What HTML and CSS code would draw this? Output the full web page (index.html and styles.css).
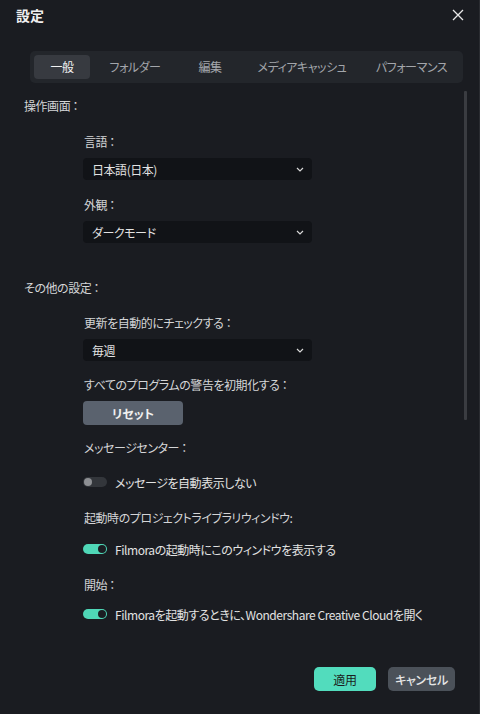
FILE: index.html
```html
<!DOCTYPE html>
<html lang="ja">
<head>
<meta charset="utf-8">
<title>設定</title>
<link rel="stylesheet" href="styles.css">
</head>
<body>
<div class="window">
  <header class="titlebar">
    <span class="title">設定</span>
    <svg class="close" width="12" height="12" viewBox="0 0 12 12"><path d="M1 1 L11 11 M11 1 L1 11" stroke="#e8e8e8" stroke-width="1.3" fill="none"/></svg>
  </header>

  <nav class="tabs">
    <span class="tab active">一般</span>
    <span class="tab">フォルダー</span>
    <span class="tab">編集</span>
    <span class="tab">メディアキャッシュ</span>
    <span class="tab">パフォーマンス</span>
  </nav>

  <div class="body">
    <div class="content">
      <div class="section-label s1">操作画面 ：</div>

      <div class="field-label f-lang">言語 ：</div>
      <div class="select">
        <span>日本語(日本)</span>
        <svg class="chev" width="8" height="5" viewBox="0 0 8 5"><path d="M1 1 L4 4 L7 1" stroke="#d8d8d8" stroke-width="1.2" fill="none"/></svg>
      </div>

      <div class="field-label f-look">外観 ：</div>
      <div class="select">
        <span>ダークモード</span>
        <svg class="chev" width="8" height="5" viewBox="0 0 8 5"><path d="M1 1 L4 4 L7 1" stroke="#d8d8d8" stroke-width="1.2" fill="none"/></svg>
      </div>

      <div class="section-label s2">その他の設定 ：</div>

      <div class="field-label f-upd">更新を自動的にチェックする ：</div>
      <div class="select">
        <span>毎週</span>
        <svg class="chev" width="8" height="5" viewBox="0 0 8 5"><path d="M1 1 L4 4 L7 1" stroke="#d8d8d8" stroke-width="1.2" fill="none"/></svg>
      </div>

      <div class="field-label f-warn">すべてのプログラムの警告を初期化する ：</div>
      <button class="reset">リセット</button>

      <div class="field-label f-msg">メッセージセンター ：</div>
      <div class="toggle-row t1">
        <span class="toggle off"><span class="knob"></span></span>
        <span>メッセージを自動表示しない</span>
      </div>

      <div class="field-label f-start">起動時のプロジェクトライブラリウィンドウ:</div>
      <div class="toggle-row t2">
        <span class="toggle on"><span class="knob"></span></span>
        <span>Filmoraの起動時にこのウィンドウを表示する</span>
      </div>

      <div class="field-label f-open">開始 ：</div>
      <div class="toggle-row t3">
        <span class="toggle on"><span class="knob"></span></span>
        <span>Filmoraを起動するときに、Wondershare Creative Cloudを開く</span>
      </div>
    </div>
    <div class="scrollbar"></div>
  </div>

  <footer class="footer">
    <button class="btn apply">適用</button>
    <button class="btn cancel">キャンセル</button>
  </footer>
</div>
</body>
</html>
```
FILE: styles.css
```css
* { box-sizing: border-box; }
html, body { margin: 0; padding: 0; }
body {
  width: 480px;
  height: 714px;
  background: #1a1c21;
  font-family: "Noto Sans CJK JP", "Noto Sans", sans-serif;
  font-feature-settings: "palt";
  letter-spacing: -0.45px;
  color: #d4d5d7;
  font-size: 12px;
  overflow: hidden;
}
.window {
  width: 480px;
  height: 714px;
  display: flex;
  flex-direction: column;
  border-right: 1px solid #2a2c31;
}
.titlebar {
  height: 30px;
  display: flex;
  align-items: center;
  justify-content: space-between;
  padding: 0 16px 0 16px;
}
.title {
  font-size: 14px;
  font-weight: 700;
  color: #f0f0f0;
  line-height: 30px;
  letter-spacing: 0;
}
.close { margin-right: -1px; }

.tabs {
  margin: 21px 16px 0 30px;
  height: 32px;
  background: #23262b;
  border-radius: 5px;
  padding: 4px;
  display: grid;
  grid-template-columns: 56px 90px 60px 124px 1fr;
  align-items: center;
}
.tab {
  height: 24px;
  line-height: 24px;
  text-align: center;
  color: #a3a6ab;
  border-radius: 4px;
  white-space: nowrap;
}
.tab.active {
  background: #373a40;
  color: #f2f2f2;
}

.body {
  display: flex;
  flex: 1;
}
.content {
  flex: 1;
  padding-left: 24px;
}
.scrollbar {
  width: 3px;
  height: 329px;
  margin: 8px 12px 0 0;
  background: #3a3c41;
  border-radius: 1px;
}

.section-label {
  line-height: 16px;
  color: #d4d5d7;
}
.s1 { margin-top: 15px; }
.s2 { margin-top: 37px; }

.field-label {
  margin-left: 60px;
  line-height: 16px;
  color: #d4d5d7;
}
.f-lang { margin-top: 20px; }
.f-look { margin-top: 17px; }
.f-upd { margin-top: 19px; }
.f-warn { margin-top: 16px; }
.f-msg { margin-top: 15px; }
.f-start { margin-top: 20px; }
.f-open { margin-top: 20px; }

.select {
  margin: 8px 0 0 59px;
  width: 229px;
  height: 22px;
  background: #111317;
  border-radius: 4px;
  display: flex;
  align-items: center;
  justify-content: space-between;
  padding: 0 8px 0 9px;
  color: #e2e2e2;
}
.chev { margin-top: 1px; }

.reset {
  display: block;
  margin: 8px 0 0 59px;
  width: 100px;
  height: 24px;
  border: none;
  border-radius: 4px;
  background: #5a626e;
  color: #f0f0f0;
  font-family: inherit;
  font-feature-settings: "palt";
  font-size: 12px;
  font-weight: 700;
  padding: 0;
}

.toggle-row {
  margin-left: 59px;
  display: flex;
  align-items: center;
  gap: 8px;
  height: 16px;
  color: #e2e2e2;
}
.t1 { margin-top: 18px; }
.t2 { margin-top: 15px; }
.t3 { margin-top: 13px; }
.toggle {
  width: 24px;
  height: 10px;
  border-radius: 5px;
  display: flex;
  align-items: center;
  padding: 0 1px;
  flex: none;
}
.toggle .knob {
  width: 8px;
  height: 8px;
  border-radius: 50%;
}
.toggle.off { background: #33363b; }
.toggle.off .knob { background: #8d8f93; }
.toggle.on { background: #4fd7b7; justify-content: flex-end; }
.toggle.on .knob { background: #1b1d22; }

.footer {
  height: 47px;
  display: flex;
  justify-content: flex-end;
  align-items: flex-start;
  gap: 12px;
  padding-right: 24px;
}
.btn {
  height: 24px;
  border: none;
  border-radius: 5px;
  font-family: inherit;
  font-feature-settings: "palt";
  font-size: 12px;
  letter-spacing: -0.3px;
  padding: 0;
}
.apply {
  width: 62px;
  background: #52dcbd;
  color: #1c1d20;
}
.cancel {
  width: 67px;
  background: #4b5159;
  color: #e6e6e6;
  font-weight: 500;
}
```
